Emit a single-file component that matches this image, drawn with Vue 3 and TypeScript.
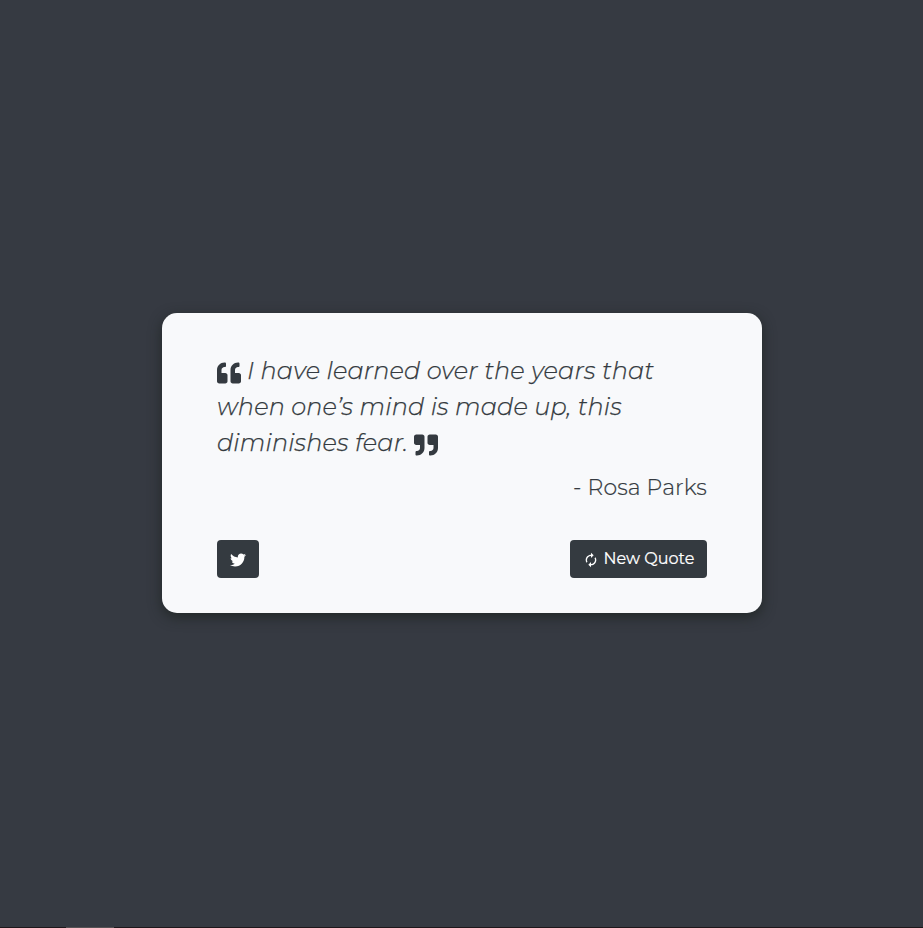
<script setup lang="ts">
interface Quote {
  lines: string[]
  author: string
}

const quote: Quote = {
  lines: ['I have learned over the years that', 'when one’s mind is made up, this', 'diminishes fear.'],
  author: 'Rosa Parks',
}
</script>

<template>
  <div class="page">
    <main class="stage">
      <section class="card">
        <blockquote class="quote">
          <div class="line">
            <svg class="mark" viewBox="0 0 512 512"><path d="M464 256h-80v-64c0-35.300 28.700-64 64-64h8c13.300 0 24-10.700 24-24V56c0-13.300-10.700-24-24-24h-8c-88.400 0-160 71.600-160 160v240c0 26.500 21.500 48 48 48h128c26.500 0 48-21.500 48-48V304c0-26.500-21.500-48-48-48zm-288 0H96v-64c0-35.300 28.700-64 64-64h8c13.300 0 24-10.700 24-24V56c0-13.300-10.700-24-24-24h-8C71.600 32 0 103.600 0 192v240c0 26.500 21.500 48 48 48h128c26.500 0 48-21.500 48-48V304c0-26.500-21.500-48-48-48z" /></svg>
            <span class="words">{{ quote.lines[0] }}</span>
          </div>
          <div class="line"><span class="words">{{ quote.lines[1] }}</span></div>
          <div class="line">
            <span class="words">{{ quote.lines[2] }}</span>
            <svg class="mark" viewBox="0 0 512 512"><path d="M464 32H336c-26.500 0-48 21.500-48 48v128c0 26.500 21.500 48 48 48h80v64c0 35.300-28.700 64-64 64h-8c-13.300 0-24 10.700-24 24v48c0 13.300 10.700 24 24 24h8c88.400 0 160-71.600 160-160V80c0-26.500-21.500-48-48-48zm-288 0H48C21.500 32 0 53.500 0 80v128c0 26.500 21.500 48 48 48h80v64c0 35.300-28.700 64-64 64h-8c-13.300 0-24 10.700-24 24v48c0 13.300 10.700 24 24 24h8c88.400 0 160-71.600 160-160V80c0-26.500-21.500-48-48-48z" /></svg>
          </div>
        </blockquote>
        <p class="author">- {{ quote.author }}</p>
        <div class="actions">
          <button class="btn share" type="button" aria-label="Tweet">
            <svg viewBox="0 0 512 512"><path d="M459.370 151.716c.325 4.548.325 9.097.325 13.645 0 138.720-105.583 298.558-298.558 298.558-59.452 0-114.680-17.219-161.137-47.106 8.447.974 16.568 1.299 25.340 1.299 49.055 0 94.213-16.568 130.274-44.832-46.132-.975-84.792-31.188-98.112-72.772 6.498.974 12.995 1.624 19.818 1.624 9.421 0 18.843-1.300 27.614-3.573-48.081-9.747-84.143-51.980-84.143-102.985v-1.299c13.969 7.797 30.214 12.670 47.431 13.319-28.264-18.843-46.781-51.005-46.781-87.391 0-19.492 5.197-37.360 14.294-52.954 51.655 63.675 129.300 105.258 216.365 109.807-1.624-7.797-2.599-15.918-2.599-24.040 0-57.828 46.782-104.934 104.934-104.934 30.213 0 57.502 12.670 76.670 33.137 23.715-4.548 46.456-13.320 66.599-25.340-7.798 24.366-24.366 44.833-46.132 57.827 21.117-2.273 41.584-8.122 60.426-16.243-14.292 20.791-32.161 39.308-52.628 54.253z" /></svg>
          </button>
          <button class="btn next" type="button">
            <svg viewBox="0 0 24 24"><path d="M12 6v3l4-4-4-4v3c-4.420 0-8 3.580-8 8 0 1.570.46 3.030 1.240 4.260L6.700 14.800c-.45-.83-.7-1.790-.7-2.800 0-3.310 2.690-6 6-6zm6.760 1.740L17.300 9.200c.44.84.7 1.790.7 2.800 0 3.310-2.690 6-6 6v-3l-4 4 4 4v-3c4.420 0 8-3.580 8-8 0-1.570-.46-3.030-1.240-4.260z" /></svg>
            <span>New Quote</span>
          </button>
        </div>
      </section>
    </main>
    <footer class="strip"><i class="thumb"></i></footer>
  </div>
</template>

<style>
body {
  margin: 0;
  background: #363a42;
}
</style>

<style scoped>
.page {
  display: flex;
  flex-direction: column;
  height: 928px;
  overflow: hidden;
  background: #363a42;
  color: #343a40;
  font-family: Montserrat, Inter, sans-serif;
}
.stage {
  flex: 1;
  display: flex;
  align-items: center;
  justify-content: center;
  padding: 0 0 1px 1px;
  box-sizing: border-box;
}
.card {
  box-sizing: border-box;
  width: 600px;
  height: 300px;
  padding: 40px 55px 35px;
  border-radius: 15px;
  background: #f8f9fb;
  box-shadow: 0 4px 13px rgba(29, 35, 33, 0.8);
}
.quote {
  margin: 0;
  font-size: 24px;
  font-style: italic;
  font-weight: 300;
  letter-spacing: 0.155px;
  -webkit-text-stroke: 0.25px #343a40;
}
.line {
  display: flex;
  align-items: center;
  gap: 6px;
  height: 36px;
  white-space: nowrap;
}
.words {
  padding-bottom: 2px;
}
.mark {
  flex: none;
  width: 24px;
  height: 24px;
  margin-top: 4px;
  fill: #343a40;
}
.author {
  margin: 0;
  padding-top: 9px;
  text-align: right;
  font-size: 22px;
  font-weight: 300;
  letter-spacing: 0.14px;
  -webkit-text-stroke: 0.2px #343a40;
  line-height: 36px;
}
.actions {
  display: flex;
  justify-content: space-between;
  margin-top: 34px;
}
.btn {
  display: flex;
  align-items: center;
  box-sizing: border-box;
  height: 38px;
  padding: 0 13px;
  border: 0;
  border-radius: 4px;
  background: #343a40;
  color: #fff;
  font: 400 16px/24px Montserrat, Inter, sans-serif;
  white-space: nowrap;
}
.btn svg {
  flex: none;
  width: 16px;
  height: 16px;
  margin-top: 2px;
  fill: currentColor;
}
.share {
  width: 42px;
}
.next {
  width: 137px;
  gap: 4.5px;
  -webkit-text-stroke: 0.2px #fff;
}
.strip {
  display: flex;
  height: 1px;
  padding-left: 66px;
  background: #1e171b;
}
.thumb {
  width: 48px;
  background: #575255;
}
</style>
